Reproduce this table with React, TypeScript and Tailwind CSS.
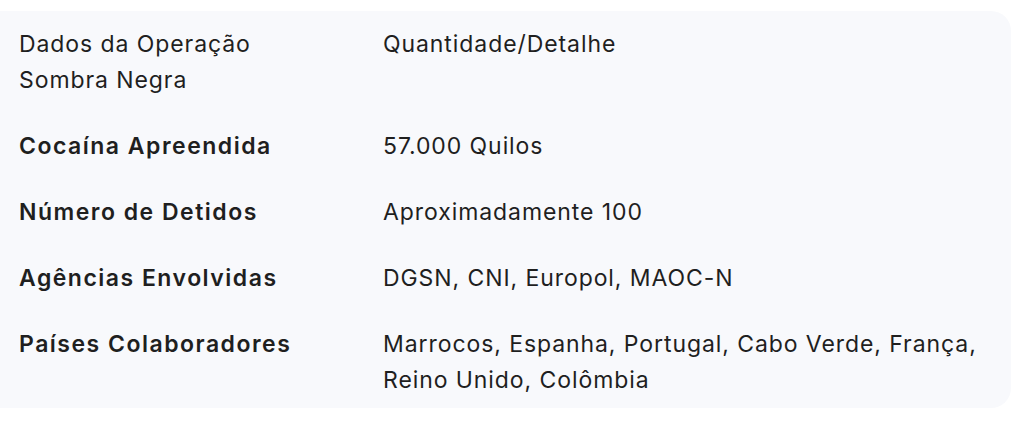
const rows = [
  { label: "Cocaína Apreendida", value: "57.000 Quilos" },
  { label: "Número de Detidos", value: "Aproximadamente 100" },
  { label: "Agências Envolvidas", value: "DGSN, CNI, Europol, MAOC-N" },
  {
    label: "Países Colaboradores",
    value: "Marrocos, Espanha, Portugal, Cabo Verde, França, Reino Unido, Colômbia",
  },
];

export default function App() {
  return (
    <div
      className="h-[428px] w-[1024px] overflow-hidden bg-white pt-[11px] text-[#1f1f1f]"
      style={{ fontFamily: "Inter, 'Liberation Sans', sans-serif" }}
    >
      {/* card runs off the left edge of the viewport */}
      <div className="-ml-[20px] h-[397px] w-[1031px] rounded-[20px] bg-[#f8f9fc] pl-[39px]">
        <div className="grid grid-cols-[364px_1fr] text-[23px] leading-[36px] tracking-[0.04em]">
          <div className="py-[15px] pr-10">Dados da Operação Sombra Negra</div>
          <div className="py-[15px]">Quantidade/Detalhe</div>
          {rows.map((r) => (
            <div key={r.label} className="contents">
              <div className="py-[15px] pr-10 font-semibold tracking-[0.065em]">{r.label}</div>
              <div className="py-[15px] pr-2">{r.value}</div>
            </div>
          ))}
        </div>
      </div>
    </div>
  );
}
